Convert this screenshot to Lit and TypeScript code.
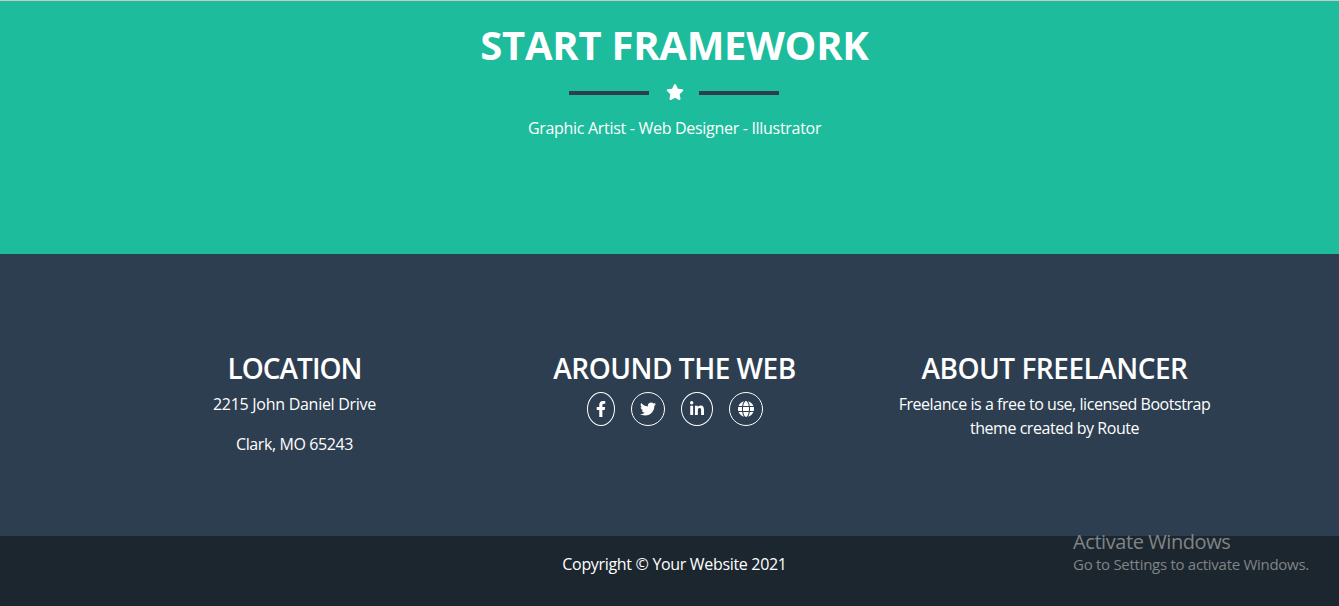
import { LitElement, html, css, svg } from "lit";
import { customElement } from "lit/decorators.js";

const STAR = "M316.9 18C311.6 7 300.4 0 288.1 0s-23.4 7-28.8 18L195 150.3 51.4 171.5c-12 1.8-22 10.2-25.7 21.7s-.7 24.2 7.9 32.7L137.8 329 113.2 474.7c-2 12 3 24.2 12.9 31.3s23 8 33.8 2.3l128.3-68.5 128.3 68.5c10.8 5.7 23.9 4.9 33.8-2.3s14.9-19.3 12.9-31.3L438.5 329 542.7 225.9c8.6-8.5 11.7-21.2 7.9-32.7s-13.7-19.9-25.7-21.7L381.2 150.3 316.9 18z";

const SOCIAL = [
  { name: "facebook", width: 320, path: "M279.14 288l14.22-92.66h-88.91v-60.13c0-25.35 12.42-50.06 52.24-50.06h40.42V6.26S260.43 0 225.36 0c-73.22 0-121.08 44.38-121.08 124.72v70.62H22.89V288h81.39v224h100.17V288z" },
  { name: "twitter", width: 512, path: "M459.37 151.716c.325 4.548.325 9.097.325 13.645 0 138.72-105.583 298.558-298.558 298.558-59.452 0-114.68-17.219-161.137-47.106 8.447.974 16.568 1.299 25.34 1.299 49.055 0 94.213-16.568 130.274-44.832-46.132-.975-84.792-31.188-98.112-72.772 6.498.974 12.995 1.624 19.818 1.624 9.421 0 18.843-1.3 27.614-3.573-48.081-9.747-84.143-51.98-84.143-102.985v-1.299c13.969 7.797 30.214 12.67 47.431 13.319-28.264-18.843-46.781-51.005-46.781-87.391 0-19.492 5.197-37.36 14.294-52.954 51.655 63.675 129.3 105.258 216.365 109.807-1.624-7.797-2.599-15.918-2.599-24.04 0-57.828 46.782-104.934 104.934-104.934 30.213 0 57.502 12.67 76.67 33.137 23.715-4.548 46.456-13.32 66.599-25.34-7.798 24.366-24.366 44.833-46.132 57.827 21.117-2.273 41.584-8.122 60.426-16.243-14.292 20.791-32.161 39.308-52.628 54.253z" },
  { name: "linkedin", width: 448, path: "M100.28 448H7.4V148.9h92.88zM53.79 108.1C24.09 108.1 0 83.5 0 53.8a53.79 53.79 0 0 1 107.58 0c0 29.7-24.1 54.3-53.79 54.3zM447.9 448h-92.68V302.4c0-34.7-.7-79.2-48.29-79.2-48.29 0-55.69 37.7-55.69 76.7V448h-92.78V148.9h89.08v40.8h1.3c12.4-23.5 42.69-48.3 87.88-48.3 94 0 111.28 61.9 111.28 142.3V448z" },
  { name: "website", width: 512, path: "M352 256c0 22.2-1.2 43.6-3.3 64H163.3c-2.2-20.4-3.3-41.8-3.3-64s1.2-43.6 3.3-64H348.7c2.2 20.4 3.3 41.8 3.3 64zm28.8-64H503.9c5.3 20.5 8.1 41.9 8.1 64s-2.8 43.5-8.1 64H380.8c2.1-20.6 3.2-42 3.2-64s-1.1-43.4-3.2-64zm112.6-32H376.7c-10-63.9-29.8-117.4-55.3-151.6c78.3 20.7 142 77.5 171.9 151.6zm-149.1 0H167.7c6.1-36.4 15.5-68.6 27-94.7c10.5-23.6 22.2-40.7 33.5-51.5C239.4 3.2 248.7 0 256 0s16.6 3.2 27.8 13.8c11.3 10.8 23 27.9 33.5 51.5c11.6 26 20.9 58.2 27 94.7zm-209 0H18.6C48.6 85.9 112.2 29.1 190.6 8.4C165.1 42.6 145.3 96.1 135.3 160zM8.1 192H131.2c-2.1 20.6-3.2 42-3.2 64s1.1 43.4 3.2 64H8.1C2.8 299.5 0 278.1 0 256s2.8-43.5 8.1-64zM194.7 446.6c-11.6-26-20.9-58.2-27-94.6H344.3c-6.1 36.4-15.5 68.6-27 94.6c-10.5 23.6-22.2 40.7-33.5 51.5C272.6 508.8 263.3 512 256 512s-16.6-3.2-27.8-13.8c-11.3-10.8-23-27.9-33.5-51.5zM135.3 352c10 63.9 29.8 117.4 55.3 151.6C112.2 482.9 48.6 426.1 18.6 352H135.3zm358.1 0c-30 74.1-93.6 130.9-171.9 151.6c25.5-34.2 45.2-87.7 55.3-151.6H493.4z" },
];

@customElement("app-root")
export class AppRoot extends LitElement {
  static styles = css`
    :host {
      display: block;
      position: relative;
      width: 100%;
      height: 606px;
      overflow: hidden;
      font: 400 16px/24px "Open Sans", "Noto Sans", sans-serif;
      color: #fff;
      background: #1c262f;
    }
    * { box-sizing: border-box; }
    h1, h2, p { margin: 0; white-space: nowrap; }
    .page { width: 1349px; text-align: center; }
    .hero {
      height: 254px;
      padding-top: 20px;
      border-top: 1px solid #c6cccb;
      background: #1cbc9c;
    }
    .title { font-size: 40px; line-height: 48px; font-weight: 700; letter-spacing: -0.27px; }
    .divider {
      display: flex;
      justify-content: center;
      align-items: center;
      height: 24px;
      margin-top: 11px;
      padding-right: 1px;
    }
    .bar { width: 80px; height: 4px; margin-top: 1px; background: #2d3e50; }
    .star { width: 18px; height: 16px; margin: 0 15.3px 0 16.7px; fill: #fff; }
    .tagline { margin-top: 12px; letter-spacing: -0.3px; }
    .footer {
      display: grid;
      grid-template-columns: repeat(3, 380px);
      justify-content: center;
      height: 282px;
      padding-top: 97px;
      background: #2d3e50;
    }
    .heading { font-size: 28px; line-height: 34px; font-weight: 600; margin-bottom: 7px; letter-spacing: -0.5px; }
    .location { letter-spacing: -1px; }
    .street { letter-spacing: -0.28px; }
    .city { margin-top: 16px; letter-spacing: -0.4px; }
    .about-text { letter-spacing: -0.45px; }
    .social { display: flex; justify-content: center; gap: 16px; }
    .ring { display: flex; padding: 8px; border: 1px solid #fff; border-radius: 50%; }
    .icon { display: block; height: 16px; fill: #fff; }
    .copyright { padding-top: 16px; height: 70px; background: #1c262f; letter-spacing: -0.32px; }
    .watermark {
      position: absolute;
      left: 1073px;
      top: 529px;
      color: #808486;
      white-space: nowrap;
    }
    .mark-title { font-size: 20px; line-height: 26px; letter-spacing: -0.42px; }
    .mark-text { font-size: 15px; line-height: 19px; letter-spacing: -0.28px; }
  `;

  render() {
    return html`
      <div class="page">
        <header class="hero">
          <h1 class="title">START FRAMEWORK</h1>
          <div class="divider">
            <span class="bar"></span>
            <svg class="star" viewBox="0 0 576 512"><path d=${STAR}></path></svg>
            <span class="bar"></span>
          </div>
          <p class="tagline">Graphic Artist - Web Designer - Illustrator</p>
        </header>
        <footer>
          <div class="footer">
            <section>
              <h2 class="heading location">LOCATION</h2>
              <p class="street">2215 John Daniel Drive</p>
              <p class="city">Clark, MO 65243</p>
            </section>
            <section>
              <h2 class="heading">AROUND THE WEB</h2>
              <div class="social">
                ${SOCIAL.map((s) => html`<a class="ring" aria-label=${s.name}>
                  <svg class="icon" width=${s.width / 32} height="16" viewBox="0 0 ${s.width} 512">${svg`<path d=${s.path}></path>`}</svg>
                </a>`)}
              </div>
            </section>
            <section>
              <h2 class="heading">ABOUT FREELANCER</h2>
              <p class="about-text">Freelance is a free to use, licensed Bootstrap</p>
              <p class="about-text">theme created by Route</p>
            </section>
          </div>
          <p class="copyright">Copyright © Your Website 2021</p>
        </footer>
      </div>
      <aside class="watermark">
        <p class="mark-title">Activate Windows</p>
        <p class="mark-text">Go to Settings to activate Windows.</p>
      </aside>
    `;
  }
}
